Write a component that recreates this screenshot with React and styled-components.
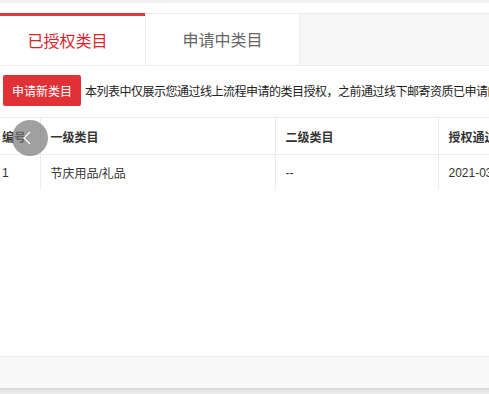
import React, { useState } from "react"
import styled, { createGlobalStyle } from "styled-components"

const GlobalStyle = createGlobalStyle`
  html, body {
    margin: 0;
    padding: 0;
    background: #fff;
    font-family: "Liberation Sans", "Noto Sans CJK SC", sans-serif;
    color: #333;
  }
`

const tabs = ["已授权类目", "申请中类目"]

const rows = [{ id: 1, first: "节庆用品/礼品", second: "--", date: "2021-03-15 10:22:08" }]

export default () => {
  const [active, setActive] = useState(0)
  return (
    <Page>
      <GlobalStyle />
      <TopStrip />
      <Panel>
        <TabBar>
          {tabs.map((t, i) => (
            <Tab key={t} active={i === active} onClick={() => setActive(i)}>
              {t}
            </Tab>
          ))}
          <TabRest />
        </TabBar>

        <Toolbar>
          <RedButton>申请新类目</RedButton>
          <Notice>
            本列表中仅展示您通过线上流程申请的类目授权，之前通过线下邮寄资质已申请的类目请联系对接人员查询
          </Notice>
        </Toolbar>

        <TableWrap>
          <Table>
            <colgroup>
              <col style={{ width: 40 }} />
              <col style={{ width: 235 }} />
              <col style={{ width: 163 }} />
              <col style={{ width: 160 }} />
            </colgroup>
            <thead>
              <tr>
                <Th first>编号</Th>
                <Th>一级类目</Th>
                <Th>二级类目</Th>
                <Th>授权通过时间</Th>
              </tr>
            </thead>
            <tbody>
              {rows.map(r => (
                <tr key={r.id}>
                  <Td first>{r.id}</Td>
                  <Td>{r.first}</Td>
                  <Td>{r.second}</Td>
                  <Td>{r.date}</Td>
                </tr>
              ))}
            </tbody>
          </Table>
          <ScrollBtn>
            <svg width="14" height="16" viewBox="0 0 14 16">
              <path d="M10 2 L4 8 L10 14" fill="none" stroke="#fff" strokeWidth="1.2" />
            </svg>
          </ScrollBtn>
        </TableWrap>
      </Panel>
      <Footer />
      <FooterEdge />
    </Page>
  )
}

const Page = styled.div`
  width: 489px;
  height: 394px;
  overflow: hidden;
  display: flex;
  flex-direction: column;
  background: #fff;
`

const TopStrip = styled.div`
  height: 3px;
  background: #f0f0f0;
  margin-bottom: 10px;
`

const Panel = styled.div`
  flex: 1;
`

const TabBar = styled.div`
  display: flex;
  height: 53px;
  border-bottom: 1px solid #ececec;
  box-sizing: border-box;
`

const Tab = styled.div`
  width: ${({ active }) => (active ? "145px" : "155px")};
  box-sizing: border-box;
  display: flex;
  align-items: center;
  justify-content: center;
  padding-bottom: 2px;
  padding-right: ${({ active }) => (active ? "10px" : "0")};
  font-size: 16px;
  cursor: pointer;
  color: ${({ active }) => (active ? "#d7262b" : "#666")};
  border-top: 3px solid ${({ active }) => (active ? "#e4393c" : "#ececec")};
  ${({ active }) => (active ? "" : "border-top-width: 1px; border-left: 1px solid #ececec; border-right: 1px solid #ececec;")}
  background: #fff;
`

const TabRest = styled.div`
  flex: 1;
  background: #f7f7f7;
  border-top: 1px solid #ececec;
`

const Toolbar = styled.div`
  display: flex;
  align-items: center;
  gap: 4px;
  padding: 9px 0 0 3px;
  height: 40px;
  box-sizing: border-box;
  white-space: nowrap;
  overflow: hidden;
`

const RedButton = styled.button`
  height: 31px;
  width: 78px;
  flex-shrink: 0;
  border: none;
  border-radius: 2px;
  background: #e03236;
  color: #fff;
  font-family: inherit;
  font-size: 12px;
  padding: 0;
  cursor: pointer;
`

const Notice = styled.span`
  font-size: 12px;
  letter-spacing: -0.5px;
  color: #222;
`

const TableWrap = styled.div`
  position: relative;
  margin-top: 11px;
  overflow: hidden;
`

const Table = styled.table`
  border-collapse: collapse;
  table-layout: fixed;
  width: 598px;
  font-size: 12px;
  border-top: 1px solid #ececec;
`

const Th = styled.th`
  height: 36px;
  text-align: left;
  font-weight: bold;
  color: #333;
  padding: 0 0 0 ${({ first }) => (first ? "2px" : "10px")};
  border-left: ${({ first }) => (first ? "none" : "1px solid #ececec")};
  border-bottom: 1px solid #ececec;
  white-space: nowrap;
  overflow: hidden;
`

const Td = styled.td`
  height: 35px;
  color: #333;
  padding: 0 0 0 ${({ first }) => (first ? "2px" : "10px")};
  border-left: ${({ first }) => (first ? "none" : "1px solid #ececec")};
  white-space: nowrap;
  overflow: hidden;
`

const ScrollBtn = styled.div`
  position: absolute;
  left: 12px;
  top: 3px;
  width: 36px;
  height: 36px;
  border-radius: 50%;
  background: rgba(120, 120, 120, 0.7);
  display: flex;
  align-items: center;
  justify-content: center;
  padding-right: 6px;
  box-sizing: border-box;
`

const Footer = styled.div`
  height: 31px;
  background: #f8f8f8;
  border-top: 1px solid #ececec;
`

const FooterEdge = styled.div`
  height: 6px;
  background: linear-gradient(#d6d6d6, #e6e6e6 50%, #ececec);
`
